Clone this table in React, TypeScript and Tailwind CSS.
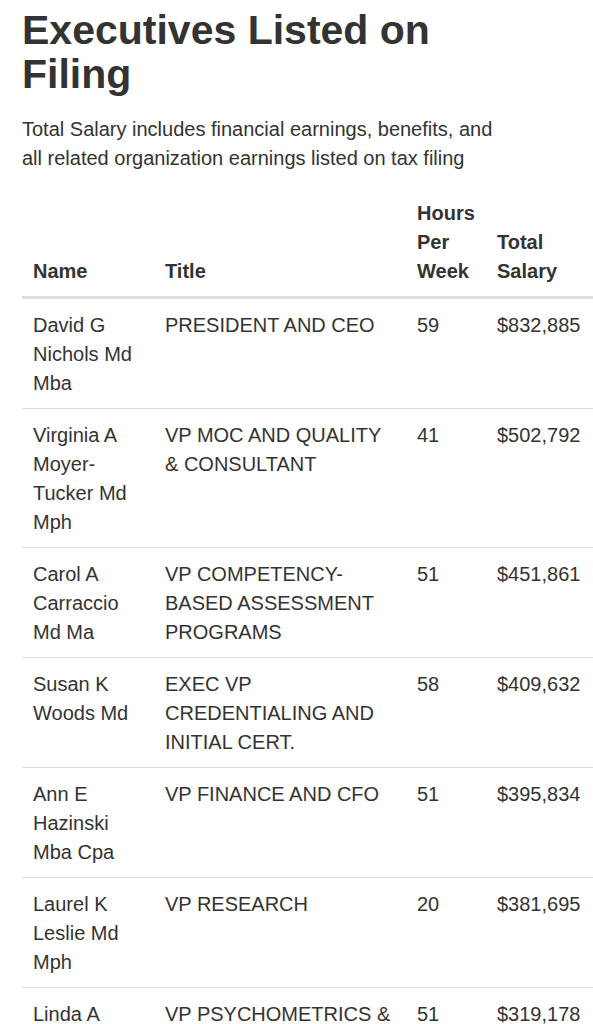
import React from 'react';

type Executive = {
  name: string;
  title: string;
  hours: number;
  salary: string;
};

const executives: Executive[] = [
  { name: 'David G Nichols Md Mba', title: 'PRESIDENT AND CEO', hours: 59, salary: '$832,885' },
  { name: 'Virginia A Moyer-Tucker Md Mph', title: 'VP MOC AND QUALITY & CONSULTANT', hours: 41, salary: '$502,792' },
  { name: 'Carol A Carraccio Md Ma', title: 'VP COMPETENCY-BASED ASSESSMENT PROGRAMS', hours: 51, salary: '$451,861' },
  { name: 'Susan K Woods Md', title: 'EXEC VP CREDENTIALING AND INITIAL CERT.', hours: 58, salary: '$409,632' },
  { name: 'Ann E Hazinski Mba Cpa', title: 'VP FINANCE AND CFO', hours: 51, salary: '$395,834' },
  { name: 'Laurel K Leslie Md Mph', title: 'VP RESEARCH', hours: 20, salary: '$381,695' },
  { name: 'Linda A', title: 'VP PSYCHOMETRICS &', hours: 51, salary: '$319,178' },
];

export default function App() {
  return (
    <div className="min-h-screen overflow-hidden bg-white pl-[22px] pt-2 font-['Liberation_Sans',Arial,sans-serif] text-[#333333]">
      {/* Heading */}
      <h1 className="text-[41px] font-bold leading-[44px] text-[#333333]">
        Executives Listed on
        <br />
        Filing
      </h1>
      <p className="mt-[19px] max-w-[485px] text-[20px] leading-[29px]">
        Total Salary includes financial earnings, benefits, and all related
        organization earnings listed on tax filing
      </p>

      {/* Executives table */}
      <table className="mt-[14px] w-[571px] table-fixed border-collapse text-left text-[20px] leading-[29px]">
        <colgroup>
          <col className="w-[132px]" />
          <col className="w-[252px]" />
          <col className="w-[80px]" />
          <col className="w-[107px]" />
        </colgroup>
        <thead>
          <tr className="border-b-[3px] border-[#dddddd]">
            <th className="px-[11px] pb-[10px] pt-3 align-bottom font-bold">Name</th>
            <th className="px-[11px] pb-[10px] pt-3 align-bottom font-bold">Title</th>
            <th className="px-[11px] pb-[10px] pt-3 align-bottom font-bold">Hours Per Week</th>
            <th className="px-[11px] pb-[10px] pt-3 align-bottom font-bold">Total Salary</th>
          </tr>
        </thead>
        <tbody>
          {executives.map((exec) => (
            <tr key={exec.name} className="border-b border-[#dddddd]">
              <td className="px-[11px] pb-[10px] pt-3 align-top">{exec.name}</td>
              <td className="px-[11px] pb-[10px] pt-3 align-top">{exec.title}</td>
              <td className="px-[11px] pb-[10px] pt-3 align-top">{exec.hours}</td>
              <td className="px-[11px] pb-[10px] pt-3 align-top">{exec.salary}</td>
            </tr>
          ))}
        </tbody>
      </table>
    </div>
  );
}
